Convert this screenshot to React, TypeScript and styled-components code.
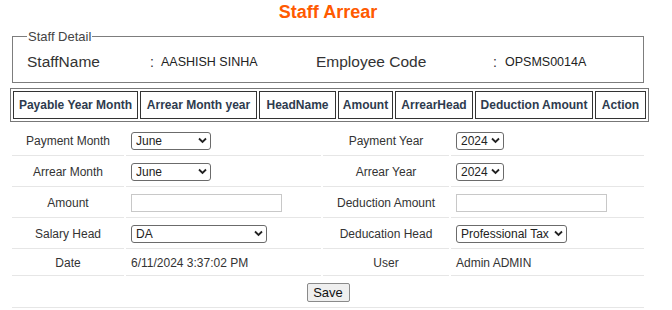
import React from "react";
import styled, { createGlobalStyle } from "styled-components";

const GlobalStyle = createGlobalStyle`
  body {
    margin: 0;
    background: #fff;
    font-family: "Liberation Sans", Arial, sans-serif;
    color: #333;
  }
`;

const Page = styled.div`
  width: 636px;
  padding: 0 10px;
`;

const Title = styled.h2`
  margin: 0;
  height: 24px;
  line-height: 24px;
  text-align: center;
  font-size: 18px;
  font-weight: bold;
  color: #ff5a00;
`;

const Fieldset = styled.fieldset`
  margin: 5px 2px 0 2px;
  padding: 8px 14px 10px 14px;
  border: 1px solid #7d7d7d;
`;

const Legend = styled.legend`
  padding: 0 1px;
  font-size: 13px;
  color: #444;
`;

const StaffRow = styled.div`
  display: grid;
  grid-template-columns: 123px 11px 155px 177px 12px 1fr;
  align-items: center;
  height: 20px;
`;

const StaffLabel = styled.span`
  font-size: 15.5px;
  color: #333;
`;

const Colon = styled.span`
  font-size: 14px;
  color: #333;
`;

const StaffValue = styled.span`
  font-size: 12.5px;
  color: #222;
`;

const HeadTable = styled.table`
  margin-top: 5px;
  width: 636px;
  border: 1px solid #777;
  border-spacing: 2px;
  table-layout: fixed;
`;

const HeadCell = styled.th<{ $w: number }>`
  width: ${(p) => p.$w}px;
  height: 26px;
  padding: 0;
  border: 1px solid #333;
  font-size: 12px;
  font-weight: bold;
  color: #2e3b4e;
  text-align: center;
  white-space: nowrap;
`;

const FormTable = styled.table`
  margin: 3px 0 0 0;
  width: 636px;
  border-spacing: 2px;
  table-layout: fixed;
`;

const Cell = styled.td<{ $w?: number; $label?: boolean; $center?: boolean }>`
  ${(p) => (p.$w ? `width: ${p.$w}px;` : "")}
  padding: 5px;
  border-bottom: 1px solid #e6e6e6;
  font-size: 12px;
  line-height: 14px;
  color: #333;
  text-align: ${(p) => (p.$label || p.$center ? "center" : "left")};
  vertical-align: middle;
`;

const SelectWrap = styled.div<{ $w: number }>`
  position: relative;
  width: ${(p) => p.$w}px;
  height: 18px;
  svg {
    position: absolute;
    right: 4px;
    top: 5px;
    pointer-events: none;
  }
`;

const Select = styled.select`
  appearance: none;
  display: block;
  width: 100%;
  height: 18px;
  margin: 0;
  padding: 0 0 0 4px;
  border: 1px solid #6b6b6b;
  border-radius: 3px;
  background: #fff;
  font-family: "Liberation Sans", Arial, sans-serif;
  font-size: 12px;
  color: #222;
  outline: none;
`;

const TextInput = styled.input`
  display: block;
  box-sizing: border-box;
  width: 151px;
  height: 18px;
  margin: 0;
  border: 1px solid #c8c8c8;
  padding: 0 3px;
  font-size: 12px;
`;

const SaveButton = styled.button`
  display: block;
  margin: 0 auto;
  width: 43px;
  height: 19px;
  padding: 0;
  border: 1px solid #8a8a8a;
  border-radius: 2px;
  background: #efefef;
  font-family: "Liberation Sans", Arial, sans-serif;
  font-size: 13px;
  color: #111;
`;

const Chevron = () => (
  <svg width="9" height="7" viewBox="0 0 9 7">
    <path d="M1 1.5 L4.5 5 L8 1.5" fill="none" stroke="#222" strokeWidth="1.8" />
  </svg>
);

function Dropdown({ width, value }: { width: number; value: string }) {
  return (
    <SelectWrap $w={width}>
      <Select defaultValue={value}>
        <option>{value}</option>
      </Select>
      <Chevron />
    </SelectWrap>
  );
}

const headers = [
  { name: "Payable Year Month", w: 123 },
  { name: "Arrear Month year", w: 115 },
  { name: "HeadName", w: 75 },
  { name: "Amount", w: 53 },
  { name: "ArrearHead", w: 76 },
  { name: "Deduction Amount", w: 116 },
  { name: "Action", w: 49 },
];

export default function App() {
  return (
    <Page>
      <GlobalStyle />
      <Title>Staff Arrear</Title>
      <Fieldset>
        <Legend>Staff Detail</Legend>
        <StaffRow>
          <StaffLabel>StaffName</StaffLabel>
          <Colon>:</Colon>
          <StaffValue>AASHISH SINHA</StaffValue>
          <StaffLabel>Employee Code</StaffLabel>
          <Colon>:</Colon>
          <StaffValue>OPSMS0014A</StaffValue>
        </StaffRow>
      </Fieldset>

      <HeadTable>
        <thead>
          <tr>
            {headers.map((h) => (
              <HeadCell key={h.name} $w={h.w}>
                {h.name}
              </HeadCell>
            ))}
          </tr>
        </thead>
      </HeadTable>

      <FormTable>
        <tbody>
          <tr>
            <Cell $w={102} $label>Payment Month</Cell>
            <Cell $w={185}><Dropdown width={80} value="June" /></Cell>
            <Cell $w={116} $label>Payment Year</Cell>
            <Cell><Dropdown width={48} value="2024" /></Cell>
          </tr>
          <tr>
            <Cell $label>Arrear Month</Cell>
            <Cell><Dropdown width={80} value="June" /></Cell>
            <Cell $label>Arrear Year</Cell>
            <Cell><Dropdown width={48} value="2024" /></Cell>
          </tr>
          <tr>
            <Cell $label>Amount</Cell>
            <Cell><TextInput type="text" /></Cell>
            <Cell $label>Deduction Amount</Cell>
            <Cell><TextInput type="text" /></Cell>
          </tr>
          <tr>
            <Cell $label>Salary Head</Cell>
            <Cell><Dropdown width={136} value="DA" /></Cell>
            <Cell $label>Deducation Head</Cell>
            <Cell><Dropdown width={111} value="Professional Tax" /></Cell>
          </tr>
          <tr>
            <Cell $label>Date</Cell>
            <Cell>6/11/2024 3:37:02 PM</Cell>
            <Cell $label>User</Cell>
            <Cell>Admin ADMIN</Cell>
          </tr>
          <tr>
            <Cell colSpan={4} $center>
              <SaveButton>Save</SaveButton>
            </Cell>
          </tr>
        </tbody>
      </FormTable>
    </Page>
  );
}
